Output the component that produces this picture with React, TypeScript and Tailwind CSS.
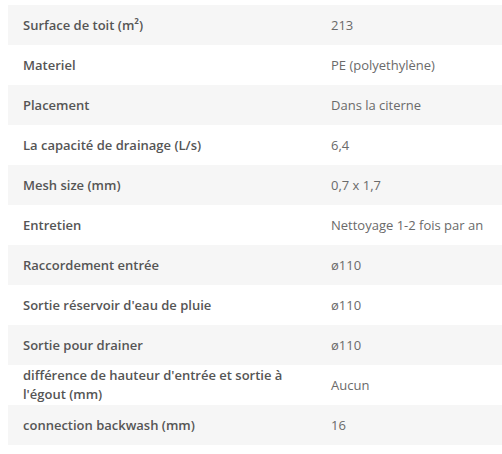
const rows: [string, string][] = [
  ["Surface de toit (m²)", "213"],
  ["Materiel", "PE (polyethylène)"],
  ["Placement", "Dans la citerne"],
  ["La capacité de drainage (L/s)", "6,4"],
  ["Mesh size (mm)", "0,7 x 1,7"],
  ["Entretien", "Nettoyage 1-2 fois par an"],
  ["Raccordement entrée", "ø110"],
  ["Sortie réservoir d'eau de pluie", "ø110"],
  ["Sortie pour drainer", "ø110"],
  ["différence de hauteur d'entrée et sortie à l'égout (mm)", "Aucun"],
  ["connection backwash (mm)", "16"],
];

export default function App() {
  return (
    <div className="w-[502px] h-[454px] bg-white pt-[5px] pl-2 overflow-hidden" style={{ fontFamily: '"Open Sans", sans-serif' }}>
      <table className="w-[494px] border-collapse text-[13px]">
        <tbody>
          {rows.map(([label, value], i) => (
            <tr key={label} className={i % 2 === 0 ? "bg-[#f6f6f6]" : "bg-white"}>
              <td className="w-[308px] h-10 px-[15px] py-0 align-middle font-semibold text-[#555555] leading-[19px]">
                {label}
              </td>
              <td className="h-10 px-[15px] py-0 align-middle text-[#6a6a6a] leading-[19px] whitespace-nowrap">
                {value}
              </td>
            </tr>
          ))}
        </tbody>
      </table>
    </div>
  );
}
